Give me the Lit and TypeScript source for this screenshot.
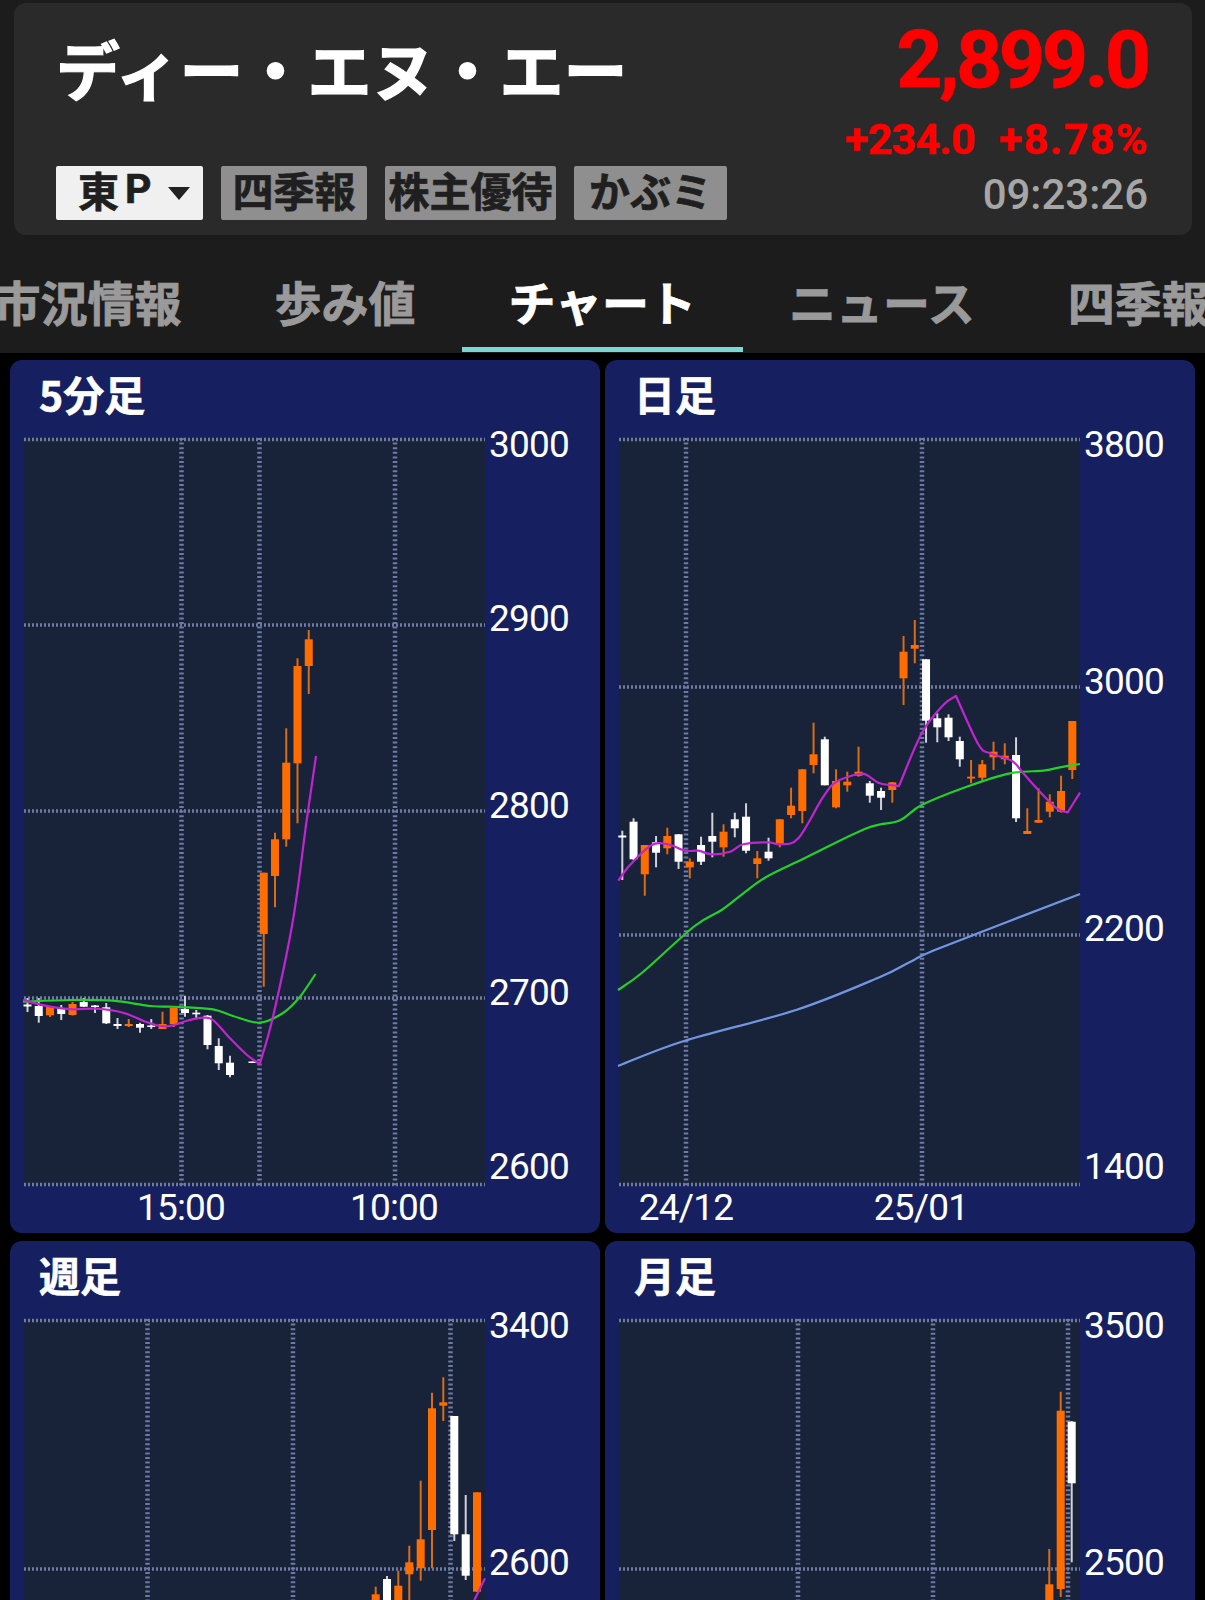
import { LitElement, html, css, svg } from "lit";
import { customElement } from "lit/decorators.js";

type Candle = [number, "o" | "w", number, number, number, number];
type Pt = [number, number];

interface Line {
  color: string;
  pts: Pt[];
  // indexes of points that stay sharp corners
  corners?: number[];
}

interface Chart {
  title: string;
  x: number;
  y: number;
  vgrid: number[];
  hgrid: number[];
  labels: [string, number][];
  times?: [string, number][];
  candles: Candle[];
  lines: Line[];
}

const MAGENTA = "#c025cf";
const GREEN = "#25d02a";
const BLUE = "#7396e2";

// all chart values below are page coordinates, the svg viewBox maps them onto the plot
const idx5 = (i: number) => 27.5 + 11.25 * i;
const idxD = (i: number) => 622.3 + 11.25 * i;

const MIN5: Candle[] = [
  [idx5(0), "w", 998, 1004.5, 1006.5, 1012],
  [idx5(1), "w", 998, 1006, 1016, 1022.7],
  [idx5(2), "o", 1006, 1006, 1015.3, 1017],
  [idx5(3), "w", 1005, 1008, 1014, 1020],
  [idx5(4), "o", 1002, 1004, 1015, 1015.5],
  [idx5(5), "w", 998, 1002, 1006.7, 1007],
  [idx5(6), "w", 1005, 1005.5, 1007, 1013],
  [idx5(7), "w", 1003, 1007.3, 1023.3, 1024],
  [idx5(8), "w", 1018, 1024, 1026, 1029],
  [idx5(9), "o", 1019, 1024, 1026, 1027],
  [idx5(10), "w", 1022.7, 1024, 1027.7, 1032.7],
  [idx5(11), "w", 1019, 1025.5, 1027, 1029],
  [idx5(12), "o", 1011.7, 1024, 1029, 1029],
  [idx5(13), "o", 1008, 1008, 1024, 1027],
  [idx5(14), "w", 995.7, 1009, 1013, 1016.7],
  [idx5(15), "w", 1010, 1012.7, 1014.3, 1019.3],
  [idx5(16), "w", 1015, 1015.7, 1045, 1049.3],
  [idx5(17), "w", 1038.3, 1046, 1063.3, 1070],
  [idx5(18), "w", 1055.7, 1062.7, 1075, 1077.3],
  [idx5(20), "w", 1061.5, 1061.5, 1063, 1063],
  [idx5(21), "o", 872.7, 872.7, 934, 986.7],
  [idx5(22), "o", 832.7, 839.3, 876, 907.3],
  [idx5(23), "o", 728.3, 762.7, 839.3, 846.7],
  [idx5(24), "o", 658.3, 666, 763.3, 823.3],
  [idx5(25), "o", 630, 639.3, 666, 694],
];

const DAILY: Candle[] = [
  [idxD(0), "w", 830.7, 835.5, 837.5, 880],
  [idxD(1), "w", 818.3, 821.7, 859.3, 860],
  [idxD(2), "o", 845, 845, 874.3, 895.7],
  [idxD(3), "w", 836, 842.3, 852.7, 867.3],
  [idxD(4), "o", 827.7, 836, 848.3, 854.3],
  [idxD(5), "w", 834, 834.3, 861.7, 869],
  [idxD(6), "o", 858.3, 861.7, 867.3, 878.3],
  [idxD(7), "w", 836.7, 845, 861.7, 865],
  [idxD(8), "w", 812.7, 836, 841.7, 857.3],
  [idxD(9), "o", 824.3, 831.7, 847.3, 856.7],
  [idxD(10), "w", 812.7, 819.3, 828.3, 837.3],
  [idxD(11), "w", 803.3, 816.7, 850.7, 853.3],
  [idxD(12), "o", 851, 858.3, 864, 878.3],
  [idxD(13), "w", 837.7, 851.7, 858.3, 860.7],
  [idxD(14), "o", 819, 819.3, 843.3, 847.3],
  [idxD(15), "o", 787.7, 805.7, 815, 818.3],
  [idxD(16), "o", 769, 769.3, 811, 823.3],
  [idxD(17), "o", 722.7, 754.3, 765, 773.3],
  [idxD(18), "w", 736.7, 739.3, 785.3, 785.3],
  [idxD(19), "o", 769.3, 781, 807.3, 808.3],
  [idxD(20), "o", 771.7, 781.7, 785.3, 791.7],
  [idxD(21), "o", 746.7, 771.7, 775.7, 776.7],
  [idxD(22), "w", 781, 783.3, 795.7, 802.7],
  [idxD(23), "w", 787.7, 791, 797.7, 810],
  [idxD(24), "o", 782, 782.3, 790, 802.7],
  [idxD(25), "o", 636, 651.7, 678.3, 705],
  [idxD(26), "o", 620, 645, 648.7, 663.3],
  [idxD(27), "w", 659, 659.3, 720.7, 742.7],
  [idxD(28), "w", 713.3, 718.3, 727.3, 742.3],
  [idxD(29), "w", 714.3, 717.7, 737.3, 741],
  [idxD(30), "w", 736.7, 741, 759.3, 766.7],
  [idxD(31), "o", 760, 776.7, 778.5, 783.3],
  [idxD(32), "o", 760, 764.3, 777.7, 781.7],
  [idxD(33), "o", 741.7, 751.7, 757.3, 770],
  [idxD(34), "o", 743.3, 755.7, 759.3, 764.3],
  [idxD(35), "w", 737.3, 755, 818.3, 822],
  [idxD(36), "o", 808.3, 831, 834, 834],
  [idxD(37), "o", 788.3, 820, 822.7, 822.7],
  [idxD(38), "o", 794.3, 801.7, 811.7, 817.3],
  [idxD(39), "o", 775.7, 791, 811.7, 812.7],
  [idxD(40), "o", 721, 721, 770, 779],
];

const WEEKLY: Candle[] = [
  [375.7, "o", 1586.7, 1594.3, 1620, 1620],
  [387, "w", 1576, 1579, 1620, 1620],
  [398.3, "o", 1570.7, 1585.7, 1620, 1620],
  [409.3, "o", 1545.7, 1562.3, 1574.3, 1620],
  [420.7, "o", 1480.7, 1539.3, 1568.3, 1580.7],
  [432, "o", 1392.7, 1408.3, 1530, 1568.3],
  [443.3, "o", 1377.3, 1402.3, 1405.7, 1421],
  [454.3, "w", 1416, 1416, 1534.3, 1541],
  [465.7, "w", 1495, 1534.3, 1575.7, 1580],
  [477, "o", 1492.3, 1492.3, 1591.7, 1592],
];

const MONTHLY: Candle[] = [
  [1049.3, "o", 1549, 1584.3, 1620, 1620],
  [1060.7, "o", 1391.7, 1410.7, 1589, 1597],
  [1071.7, "w", 1421, 1421.7, 1483.3, 1562.3],
];

const CHARTS: Chart[] = [
  {
    title: "5分足",
    x: 24,
    y: 438,
    vgrid: [181.5, 259.5, 395],
    hgrid: [439.5, 625, 811, 998, 1184.5],
    labels: [["3000", 445], ["2900", 619], ["2800", 806], ["2700", 993], ["2600", 1167]],
    times: [["15:00", 181], ["10:00", 394]],
    candles: MIN5,
    lines: [
      {
        color: GREEN,
        pts: [[23, 1001.7], [70, 1000], [113, 1000.7], [150, 1006], [180, 1007], [213, 1009.3], [233, 1016], [259.7, 1022.7], [283, 1013], [300, 996.7], [315.5, 974]],
      },
      {
        color: MAGENTA,
        corners: [13],
        pts: [[23, 1000], [50, 1006.7], [73, 1009.3], [96.7, 1008.7], [123, 1012.7], [143, 1020.7], [160, 1026], [173, 1025.3], [187, 1020.7], [203, 1017.7], [213, 1020], [230, 1038.3], [247, 1055], [259.7, 1064], [273, 1016.7], [293, 920], [306.7, 820], [316, 756]],
      },
    ],
  },
  {
    title: "日足",
    x: 619,
    y: 438,
    vgrid: [686, 922],
    hgrid: [439.5, 687, 935, 1184.5],
    labels: [["3800", 445], ["3000", 682], ["2200", 929], ["1400", 1167]],
    times: [["24/12", 686], ["25/01", 921]],
    candles: DAILY,
    lines: [
      {
        color: BLUE,
        pts: [[618, 1066], [684, 1041], [796, 1010], [880, 977], [910, 962], [940, 948], [1080, 894]],
      },
      {
        color: GREEN,
        pts: [[618, 990], [643, 972], [694, 926.5], [721.7, 910], [743.3, 893.3], [766.7, 876.7], [805, 858], [866.7, 828.3], [899, 820.7], [921.7, 805], [966.7, 786.7], [1010, 773.3], [1043.3, 770.7], [1060, 767.3], [1080, 764]],
      },
      {
        color: MAGENTA,
        corners: [17, 20, 27],
        pts: [[618.3, 880.7], [630, 865], [651.7, 845], [668.3, 844.3], [685, 850.7], [698.3, 850.7], [711.7, 854.3], [730, 851.7], [743.3, 844.3], [768.3, 842.3], [780, 844.3], [798.3, 838.3], [823.3, 796.7], [836.7, 781.7], [858.3, 774], [866.7, 775], [880, 783.3], [899, 786], [921.7, 733.3], [943.3, 705], [956, 696], [978.3, 744.3], [990, 753.3], [1011.7, 760.7], [1023.3, 773.3], [1038.3, 790], [1056.7, 808.3], [1067.7, 812.3], [1080, 792.7]],
      },
    ],
  },
  {
    title: "週足",
    x: 24,
    y: 1319,
    vgrid: [147.5, 293, 450.5],
    hgrid: [1320.5, 1569],
    labels: [["3400", 1326], ["2600", 1563]],
    candles: WEEKLY,
    lines: [{ color: MAGENTA, pts: [[474.3, 1600], [485, 1578.3]] }],
  },
  {
    title: "月足",
    x: 619,
    y: 1319,
    vgrid: [798, 933, 1068],
    hgrid: [1320.5, 1569],
    labels: [["3500", 1326], ["2500", 1563]],
    candles: MONTHLY,
    lines: [],
  },
];

const TABS = ["市況情報", "歩み値", "チャート", "ニュース", "四季報"];
const TAGS = [
  { label: "四季報", cls: "w3" },
  { label: "株主優待", cls: "w4" },
  { label: "かぶミ", cls: "wk" },
];

const PLOT_W = 461;
const PLOT_H = 748;

// catmull-rom through the points, split at the sharp corners
function linePath(l: Line): string {
  const cuts = [0, ...(l.corners ?? []), l.pts.length - 1];
  let d = `M${l.pts[0][0]} ${l.pts[0][1]}`;
  for (let s = 0; s < cuts.length - 1; s++) {
    const part = l.pts.slice(cuts[s], cuts[s + 1] + 1);
    for (let i = 0; i < part.length - 1; i++) {
      const p0 = part[Math.max(i - 1, 0)];
      const p1 = part[i];
      const p2 = part[i + 1];
      const p3 = part[Math.min(i + 2, part.length - 1)];
      const c1x = p1[0] + (p2[0] - p0[0]) / 6;
      const c1y = p1[1] + (p2[1] - p0[1]) / 6;
      const c2x = p2[0] - (p3[0] - p1[0]) / 6;
      const c2y = p2[1] - (p3[1] - p1[1]) / 6;
      d += ` C${c1x} ${c1y} ${c2x} ${c2y} ${p2[0]} ${p2[1]}`;
    }
  }
  return d;
}

@customElement("app-root")
export class AppRoot extends LitElement {
  static styles = css`
    :host {
      display: block;
      height: 1600px;
      overflow: hidden;
      background: #000;
      font-family: "Noto Sans CJK JP", Roboto, sans-serif;
    }
    .top {
      background: #1c1c1c;
      padding: 3px 13px 0 14px;
    }
    .card {
      height: 232px;
      box-sizing: border-box;
      background: #2a2a2a;
      border-radius: 12px;
      padding: 0 44px 15px 42px;
      display: flex;
      justify-content: space-between;
    }
    .left {
      display: flex;
      flex-direction: column;
      justify-content: space-between;
    }
    .name {
      margin-top: 22px;
      font-size: 64px;
      line-height: 84px;
      font-weight: 700;
      color: #fff;
      white-space: nowrap;
      -webkit-text-stroke: 1.2px #fff;
    }
    .tags {
      display: flex;
      gap: 18px;
    }
    .tag {
      height: 54px;
      box-sizing: border-box;
      padding: 0 0 8px;
      display: flex;
      align-items: center;
      justify-content: center;
      background: #8f8f8f;
      border-radius: 2px;
      color: #1f1f1f;
      font-size: 41px;
      font-weight: 700;
      line-height: 48px;
      white-space: nowrap;
      -webkit-text-stroke: 0.7px #1f1f1f;
    }
    .w3 {
      width: 146px;
    }
    .w4 {
      width: 171px;
    }
    .wk {
      width: 153px;
    }
    .tag.market {
      width: 147px;
      padding: 0 0 8px 22px;
      justify-content: flex-start;
      background: #f0f0f0;
    }
    .tag.market .p {
      font-family: Roboto, sans-serif;
      font-size: 41px;
      margin-left: 6px;
    }
    .caret {
      margin: 8px 0 0 17px;
      width: 0;
      height: 0;
      border-left: 11px solid transparent;
      border-right: 11px solid transparent;
      border-top: 13px solid #222;
    }
    .right {
      display: flex;
      flex-direction: column;
      align-items: flex-end;
      font-family: Roboto, sans-serif;
      white-space: nowrap;
    }
    .price {
      margin-top: 11px;
      font-size: 80px;
      line-height: 92px;
      font-weight: 700;
      color: #ff0000;
      letter-spacing: -3px;
      -webkit-text-stroke: 1px #ff0000;
    }
    .change {
      margin-top: 8px;
      display: flex;
      gap: 24px;
      font-size: 43px;
      line-height: 50px;
      font-weight: 700;
      color: #ff0000;
      letter-spacing: -0.8px;
      -webkit-text-stroke: 0.5px #ff0000;
    }
    .pct {
      letter-spacing: 1.4px;
      margin-right: -1px;
    }
    .time {
      margin-top: 7px;
      font-size: 42px;
      line-height: 48px;
      font-weight: 500;
      color: #a6a6a6;
    }
    .tabbar {
      height: 118px;
      box-sizing: border-box;
      background: #1c1c1c;
      padding-bottom: 1px;
      overflow: hidden;
    }
    .tabs {
      display: flex;
      margin-left: -53px;
      height: 100%;
    }
    .tab {
      flex: none;
      box-sizing: border-box;
      height: 100%;
      padding: 19px 46.5px 0;
      display: flex;
      align-items: center;
      font-size: 47px;
      font-weight: 700;
      color: #9a9a9a;
      border-bottom: 5px solid transparent;
      white-space: nowrap;
      -webkit-text-stroke: 0.8px #9a9a9a;
    }
    .tab.on {
      color: #fff;
      border-bottom-color: #7dd6d6;
      -webkit-text-stroke-color: #fff;
    }
    .grid {
      padding: 7px 10px 0;
      display: grid;
      grid-template-columns: 590px 590px;
      gap: 8px 5px;
    }
    .panel {
      height: 873px;
      box-sizing: border-box;
      background: #162060;
      border-radius: 12px;
      padding: 0 14px;
      color: #fff;
    }
    .title {
      height: 78px;
      padding: 2px 0 0 15px;
      box-sizing: border-box;
      font-size: 41px;
      line-height: 62px;
      font-weight: 700;
      -webkit-text-stroke: 0.6px #fff;
    }
    .canvas {
      position: relative;
      height: 795px;
    }
    .plot {
      display: block;
      background: #18233a;
      overflow: visible;
    }
    .ylabel,
    .xlabel {
      position: absolute;
      font-family: Roboto, sans-serif;
      font-size: 37px;
      line-height: 44px;
      letter-spacing: -0.8px;
    }
    .ylabel {
      left: 465px;
    }
    .xlabel {
      top: 748px;
      transform: translateX(-50%);
    }
  `;

  private renderPlot(c: Chart) {
    return html`<svg class="plot" width=${PLOT_W} height=${PLOT_H} viewBox="${c.x} ${c.y} ${PLOT_W} ${PLOT_H}">
      ${c.hgrid.map(
        (y) => svg`<line x1=${c.x} x2=${c.x + PLOT_W} y1=${y} y2=${y} stroke="#6d7ba3" stroke-width="3.5" stroke-dasharray="2 2"></line>`
      )}
      ${c.vgrid.map(
        (x) => svg`<line x1=${x} x2=${x} y1=${c.y} y2=${c.y + PLOT_H} stroke="#6d7ba3" stroke-width="4.5" stroke-dasharray="2 2.6"></line>`
      )}
      ${c.candles.map(([x, kind, hi, top, bot, lo]) => {
        const fill = kind === "o" ? "#ff6d00" : "#ffffff";
        const wick = kind === "o" ? "#d96c14" : "#cfd2da";
        return svg`
          <line x1=${x} x2=${x} y1=${hi} y2=${lo} stroke=${wick} stroke-width="2"></line>
          <rect x=${x - 4} y=${top} width="8" height=${bot - top} fill=${fill}></rect>
        `;
      })}
      ${c.lines.map(
        (l) => svg`<path d=${linePath(l)} fill="none" stroke=${l.color} stroke-width="2.2" stroke-linejoin="round"></path>`
      )}
    </svg>`;
  }

  private renderPanel(c: Chart) {
    return html`<div class="panel">
      <div class="title">${c.title}</div>
      <div class="canvas">
        ${this.renderPlot(c)}
        ${c.labels.map(
          ([t, y]) => html`<div class="ylabel" style="top:${y - c.y - 22}px">${t}</div>`
        )}
        ${(c.times ?? []).map(
          ([t, x]) => html`<div class="xlabel" style="left:${x - c.x}px">${t}</div>`
        )}
      </div>
    </div>`;
  }

  render() {
    return html`
      <div class="top">
        <div class="card">
          <div class="left">
            <div class="name">ディー・エヌ・エー</div>
            <div class="tags">
              <div class="tag market">東<span class="p">P</span><span class="caret"></span></div>
              ${TAGS.map((t) => html`<div class="tag ${t.cls}">${t.label}</div>`)}
            </div>
          </div>
          <div class="right">
            <div class="price">2,899.0</div>
            <div class="change"><span>+234.0</span><span class="pct">+8.78%</span></div>
            <div class="time">09:23:26</div>
          </div>
        </div>
      </div>
      <div class="tabbar">
        <div class="tabs">
          ${TABS.map((t) => html`<div class="tab ${t === "チャート" ? "on" : ""}">${t}</div>`)}
        </div>
      </div>
      <div class="grid">${CHARTS.map((c) => this.renderPanel(c))}</div>
    `;
  }
}
